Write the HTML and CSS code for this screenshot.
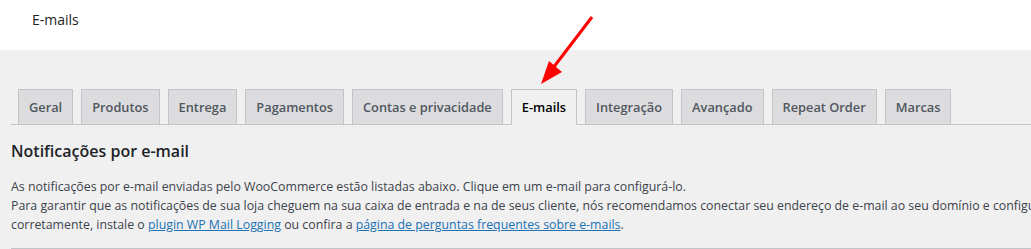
FILE: index.html
```html
<!DOCTYPE html>
<html lang="pt-BR">
<head>
<meta charset="utf-8">
<title>E-mails</title>
<link rel="stylesheet" href="styles.css">
</head>
<body>
<header class="topbar">
  <h1 class="page-title">E-mails</h1>
</header>
<main class="wrap">
  <nav class="tabs">
    <a class="tab" href="#">Geral</a>
    <a class="tab" href="#">Produtos</a>
    <a class="tab" href="#">Entrega</a>
    <a class="tab" href="#">Pagamentos</a>
    <a class="tab" href="#">Contas e privacidade</a>
    <a class="tab tab-active" href="#">E-mails</a>
    <a class="tab" href="#">Integração</a>
    <a class="tab" href="#">Avançado</a>
    <a class="tab" href="#">Repeat Order</a>
    <a class="tab" href="#">Marcas</a>
  </nav>
  <h2 class="section-title">Notificações por e-mail</h2>
  <p class="desc">As notificações por e-mail enviadas pelo WooCommerce estão listadas abaixo. Clique em um e-mail para configurá-lo.<br>Para garantir que as notificações de sua loja cheguem na sua caixa de entrada e na de seus cliente, nós recomendamos conectar seu endereço de e-mail ao seu domínio e configurar um servidor SMTP dedicado. Se algo não parecer estar sendo enviado<br>corretamente, instale o <a href="#">plugin WP Mail Logging</a> ou confira a <a href="#">página de perguntas frequentes sobre e-mails</a>.</p>
  <div class="table-top"></div>
</main>
<svg class="arrow" width="1031" height="249" viewBox="0 0 1031 249" aria-hidden="true">
  <line x1="592" y1="17" x2="553" y2="68" stroke="#ff0000" stroke-width="3"/>
  <polygon points="541,84 549,61 562,72" fill="#ff0000"/>
</svg>
</body>
</html>
```
FILE: styles.css
```css
html, body {
  margin: 0;
  padding: 0;
}
body {
  background: #f0f0f1;
  font-family: "Open Sans", "Noto Sans", sans-serif;
  color: #3c434a;
  overflow: hidden;
  width: 1031px;
  height: 249px;
  position: relative;
}
.topbar {
  height: 50px;
  background: #fff;
  box-sizing: border-box;
  padding: 11px 0 0 32px;
}
.page-title {
  margin: 0;
  font-size: 14px;
  line-height: 18px;
  font-weight: 400;
  color: #1e1e1e;
}
.wrap {
  padding-left: 11px;
}
.tabs {
  margin-top: 30px;
  padding-top: 9px;
  border-bottom: 1px solid #c3c4c7;
  display: flex;
  gap: 8px;
  padding-left: 7px;
  white-space: nowrap;
}
.tab {
  display: block;
  margin-bottom: -1px;
  padding: 5px 10px;
  border: 1px solid #c3c4c7;
  background: #dcdcde;
  color: #50575e;
  font-size: 12.8px;
  line-height: 24px;
  font-weight: 600;
  text-decoration: none;
}
.tab-active {
  background: #f0f0f1;
  border-bottom-color: #f0f0f1;
  color: #000;
}
.section-title {
  margin: 14px 0 0;
  font-size: 16px;
  line-height: 24px;
  font-weight: 600;
  color: #1d2327;
}
.desc {
  margin: 14px 0 0;
  font-size: 12.35px;
  line-height: 19px;
  white-space: nowrap;
}
.desc a {
  color: #2271b1;
}
.table-top {
  margin-top: 14px;
  border-top: 1px solid #c3c4c7;
}
.arrow {
  position: absolute;
  left: 0;
  top: 0;
  pointer-events: none;
}
```
